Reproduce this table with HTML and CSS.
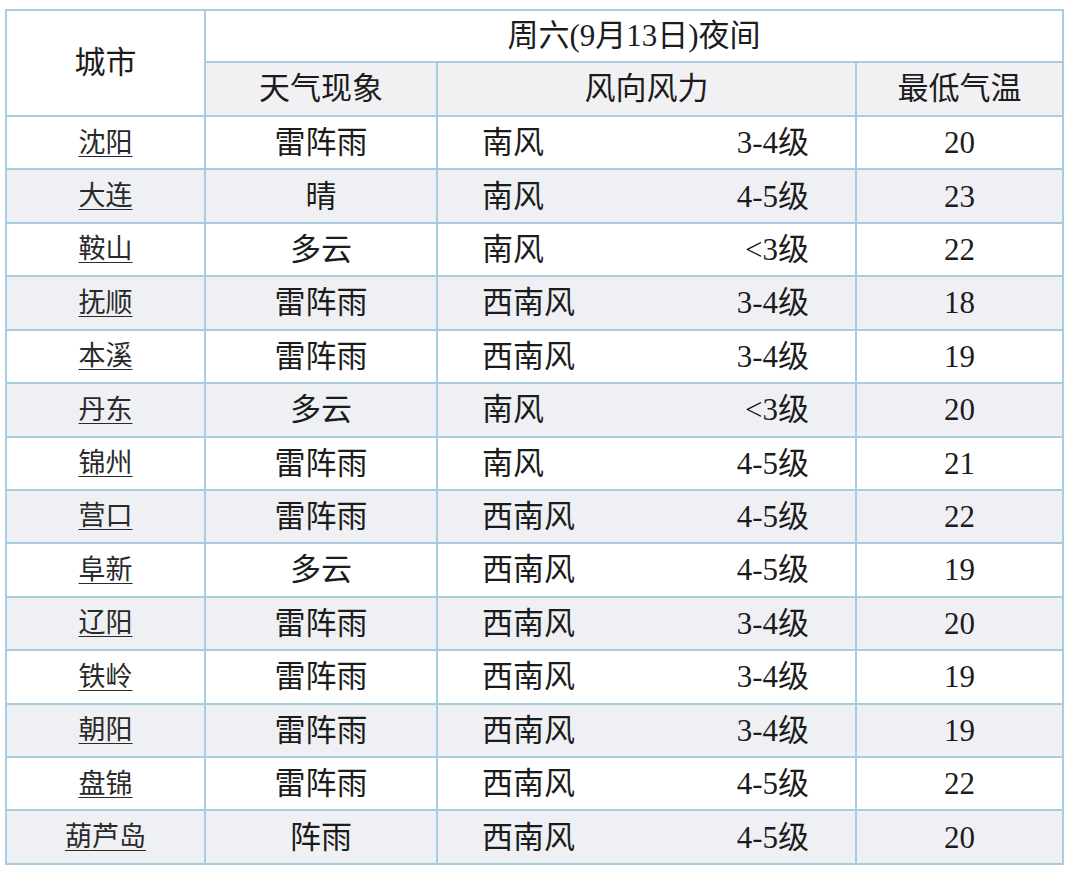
FILE: index.html
```html
<!DOCTYPE html>
<html lang="zh-CN">
<head>
<meta charset="utf-8">
<title>辽宁城市天气预报</title>
<link rel="stylesheet" href="styles.css">
</head>
<body>
<table class="wx">
  <colgroup>
    <col class="c-city">
    <col class="c-wx">
    <col class="c-wind">
    <col class="c-temp">
  </colgroup>
  <thead>
    <tr class="h1">
      <th rowspan="2" class="th-city">城市</th>
      <th colspan="3" class="th-date">周六(9月13日)夜间</th>
    </tr>
    <tr class="h2">
      <th>天气现象</th>
      <th>风向风力</th>
      <th>最低气温</th>
    </tr>
  </thead>
  <tbody>
    <tr><td class="city"><a href="#">沈阳</a></td><td>雷阵雨</td><td class="wind"><span class="wd"><span>南风</span><span>3-4级</span></span></td><td>20</td></tr>
    <tr><td class="city"><a href="#">大连</a></td><td>晴</td><td class="wind"><span class="wd"><span>南风</span><span>4-5级</span></span></td><td>23</td></tr>
    <tr><td class="city"><a href="#">鞍山</a></td><td>多云</td><td class="wind"><span class="wd"><span>南风</span><span>&lt;3级</span></span></td><td>22</td></tr>
    <tr><td class="city"><a href="#">抚顺</a></td><td>雷阵雨</td><td class="wind"><span class="wd"><span>西南风</span><span>3-4级</span></span></td><td>18</td></tr>
    <tr><td class="city"><a href="#">本溪</a></td><td>雷阵雨</td><td class="wind"><span class="wd"><span>西南风</span><span>3-4级</span></span></td><td>19</td></tr>
    <tr><td class="city"><a href="#">丹东</a></td><td>多云</td><td class="wind"><span class="wd"><span>南风</span><span>&lt;3级</span></span></td><td>20</td></tr>
    <tr><td class="city"><a href="#">锦州</a></td><td>雷阵雨</td><td class="wind"><span class="wd"><span>南风</span><span>4-5级</span></span></td><td>21</td></tr>
    <tr><td class="city"><a href="#">营口</a></td><td>雷阵雨</td><td class="wind"><span class="wd"><span>西南风</span><span>4-5级</span></span></td><td>22</td></tr>
    <tr><td class="city"><a href="#">阜新</a></td><td>多云</td><td class="wind"><span class="wd"><span>西南风</span><span>4-5级</span></span></td><td>19</td></tr>
    <tr><td class="city"><a href="#">辽阳</a></td><td>雷阵雨</td><td class="wind"><span class="wd"><span>西南风</span><span>3-4级</span></span></td><td>20</td></tr>
    <tr><td class="city"><a href="#">铁岭</a></td><td>雷阵雨</td><td class="wind"><span class="wd"><span>西南风</span><span>3-4级</span></span></td><td>19</td></tr>
    <tr><td class="city"><a href="#">朝阳</a></td><td>雷阵雨</td><td class="wind"><span class="wd"><span>西南风</span><span>3-4级</span></span></td><td>19</td></tr>
    <tr><td class="city"><a href="#">盘锦</a></td><td>雷阵雨</td><td class="wind"><span class="wd"><span>西南风</span><span>4-5级</span></span></td><td>22</td></tr>
    <tr><td class="city"><a href="#">葫芦岛</a></td><td>阵雨</td><td class="wind"><span class="wd"><span>西南风</span><span>4-5级</span></span></td><td>20</td></tr>
  </tbody>
</table>
</body>
</html>
```

FILE: styles.css
```css
html, body {
  margin: 0;
  padding: 0;
  background: #ffffff;
}

body {
  padding: 9px 0 0 5px;
  font-family: "Liberation Serif", "Noto Sans CJK SC", serif;
  color: #1c1c1c;
}

.wx {
  border-collapse: collapse;
  table-layout: fixed;
  width: 1057px;
  font-size: 31px;
}

.c-city { width: 199px; }
.c-wx { width: 232px; }
.c-wind { width: 419px; }
.c-temp { width: 207px; }

.wx th,
.wx td {
  border: 2px solid #a9cde0;
  padding: 0;
  text-align: center;
  vertical-align: middle;
  font-weight: normal;
  line-height: 1.2;
}

.h1 { height: 52px; }
.h2 { height: 54px; }
.h2 th { background: #f1f1f4; }

.th-city { background: #ffffff; }
.th-date { background: #ffffff; }

.wx tbody tr { height: 53.43px; }
.wx tbody tr:nth-child(even) td { background: #eff0f4; }

.city { font-size: 27px; }
.city a {
  color: #2a2a2a;
  text-decoration: underline;
  text-underline-offset: 4px;
  text-decoration-thickness: 1px;
}

.wind { text-align: left; }
.wd {
  display: flex;
  justify-content: space-between;
  padding: 0 46px 0 44px;
}
```
